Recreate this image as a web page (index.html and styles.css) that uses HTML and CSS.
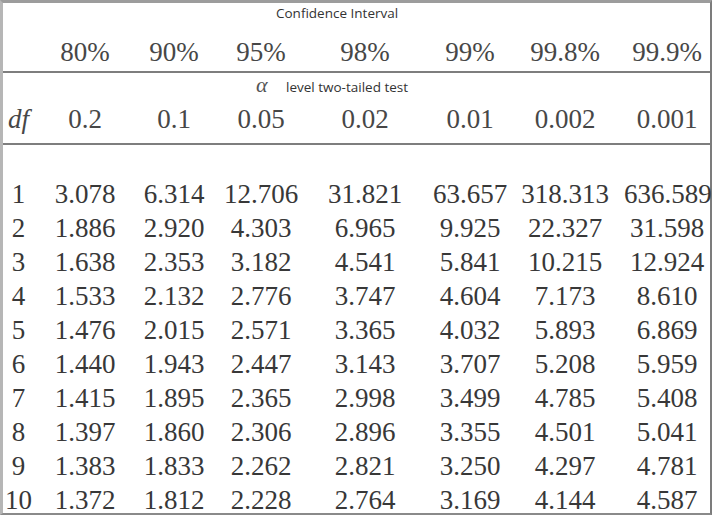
FILE: index.html
```html
<!DOCTYPE html>
<html>
<head>
<meta charset="utf-8">
<link rel="stylesheet" href="styles.css">
</head>
<body>
<div class="sheet">
  <div class="caption">Confidence Interval</div>
  <div class="row head">
    <span class="c0"></span><span class="c1">80%</span><span class="c2">90%</span><span class="c3">95%</span><span class="c4">98%</span><span class="c5">99%</span><span class="c6">99.8%</span><span class="c7">99.9%</span>
  </div>
  <div class="rule"></div>
  <div class="alpha-line"><span class="alpha">α</span><span class="alpha-text">level two-tailed test</span></div>
  <div class="row head df">
    <span class="c0 it">df</span><span class="c1">0.2</span><span class="c2">0.1</span><span class="c3">0.05</span><span class="c4">0.02</span><span class="c5">0.01</span><span class="c6">0.002</span><span class="c7">0.001</span>
  </div>
  <div class="rule gap"></div>
  <div class="data">
    <div class="row"><span class="c0">1</span><span class="c1">3.078</span><span class="c2">6.314</span><span class="c3">12.706</span><span class="c4">31.821</span><span class="c5">63.657</span><span class="c6">318.313</span><span class="c7">636.589</span></div>
    <div class="row"><span class="c0">2</span><span class="c1">1.886</span><span class="c2">2.920</span><span class="c3">4.303</span><span class="c4">6.965</span><span class="c5">9.925</span><span class="c6">22.327</span><span class="c7">31.598</span></div>
    <div class="row"><span class="c0">3</span><span class="c1">1.638</span><span class="c2">2.353</span><span class="c3">3.182</span><span class="c4">4.541</span><span class="c5">5.841</span><span class="c6">10.215</span><span class="c7">12.924</span></div>
    <div class="row"><span class="c0">4</span><span class="c1">1.533</span><span class="c2">2.132</span><span class="c3">2.776</span><span class="c4">3.747</span><span class="c5">4.604</span><span class="c6">7.173</span><span class="c7">8.610</span></div>
    <div class="row"><span class="c0">5</span><span class="c1">1.476</span><span class="c2">2.015</span><span class="c3">2.571</span><span class="c4">3.365</span><span class="c5">4.032</span><span class="c6">5.893</span><span class="c7">6.869</span></div>
    <div class="row"><span class="c0">6</span><span class="c1">1.440</span><span class="c2">1.943</span><span class="c3">2.447</span><span class="c4">3.143</span><span class="c5">3.707</span><span class="c6">5.208</span><span class="c7">5.959</span></div>
    <div class="row"><span class="c0">7</span><span class="c1">1.415</span><span class="c2">1.895</span><span class="c3">2.365</span><span class="c4">2.998</span><span class="c5">3.499</span><span class="c6">4.785</span><span class="c7">5.408</span></div>
    <div class="row"><span class="c0">8</span><span class="c1">1.397</span><span class="c2">1.860</span><span class="c3">2.306</span><span class="c4">2.896</span><span class="c5">3.355</span><span class="c6">4.501</span><span class="c7">5.041</span></div>
    <div class="row"><span class="c0">9</span><span class="c1">1.383</span><span class="c2">1.833</span><span class="c3">2.262</span><span class="c4">2.821</span><span class="c5">3.250</span><span class="c6">4.297</span><span class="c7">4.781</span></div>
    <div class="row last"><span class="c0">10</span><span class="c1">1.372</span><span class="c2">1.812</span><span class="c3">2.228</span><span class="c4">2.764</span><span class="c5">3.169</span><span class="c6">4.144</span><span class="c7">4.587</span></div>
  </div>
</div>
</body>
</html>
```

FILE: styles.css
```css
html, body {
  margin: 0;
  padding: 0;
  background: #ffffff;
}

.sheet {
  width: 707px;
  border-top: 3px solid #9c9c9c;
  border-left: 3px solid #b6b6b6;
  border-right: 2px solid #7c7c7c;
  border-bottom: 2px solid #8a8a8a;
  color: #383838;
}

.row {
  display: grid;
  grid-template-columns: 37px 90px 88px 92px 110px 98px 94px 98px;
  height: 34px;
  line-height: 34px;
  white-space: nowrap;
  font-family: "Liberation Serif", "DejaVu Serif", serif;
  font-size: 27px;
}

.caption {
  height: 32px;
  box-sizing: border-box;
  padding-left: 273px;
  font-family: "Open Sans", "Liberation Sans", sans-serif;
  font-size: 13.5px;
  line-height: 20px;
  color: #333333;
}

.row span {
  text-align: center;
}

.c0 { padding-right: 6px; }
.c3 { padding-right: 6px; }
.c5 { padding-left: 2px; }
.c7 { padding-left: 12px; }

.it {
  font-style: italic;
}

.head {
  color: #474747;
}

.rule {
  height: 2px;
  background: #7e7e7e;
  margin-top: 2px;
}

.rule.gap {
  margin-top: 7px;
}

.alpha-line {
  height: 29px;
  box-sizing: border-box;
  padding-left: 253px;
  display: flex;
  align-items: baseline;
  line-height: 24px;
}

.alpha {
  font-family: "Liberation Serif", "DejaVu Serif", serif;
  font-style: italic;
  font-size: 22px;
  color: #555555;
  width: 30px;
}

.alpha-text {
  font-family: "Open Sans", "Liberation Sans", sans-serif;
  font-size: 13.5px;
  color: #333333;
}

.data {
  height: 368px;
  box-sizing: border-box;
  padding-top: 32px;
}

.data .row.last {
  height: 31px;
}
```
